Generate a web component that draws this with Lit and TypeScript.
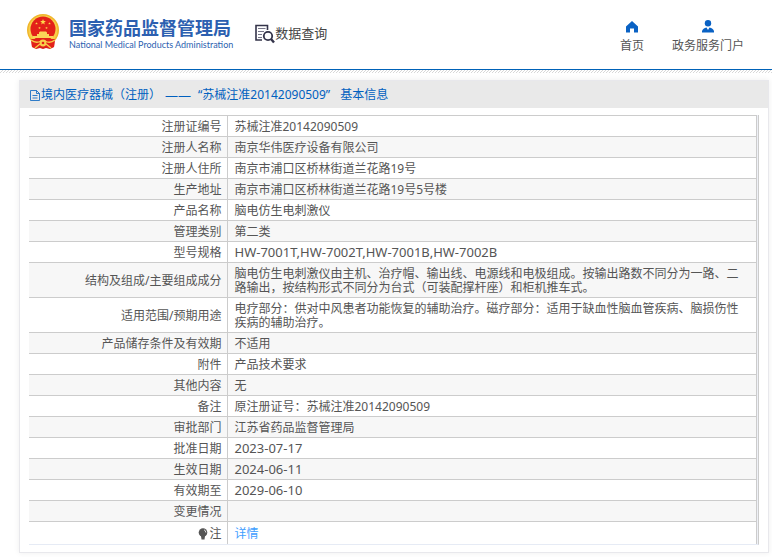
import { LitElement, html, css, svg } from "lit";
import { customElement, property } from "lit/decorators.js";
import { classMap } from "lit/directives/class-map.js";

interface Row {
  label: string;
  value: string;
  latin?: boolean;
}

const ROWS: Row[] = [
  { label: "注册证编号", value: "苏械注准20142090509" },
  { label: "注册人名称", value: "南京华伟医疗设备有限公司" },
  { label: "注册人住所", value: "南京市浦口区桥林街道兰花路19号" },
  { label: "生产地址", value: "南京市浦口区桥林街道兰花路19号5号楼" },
  { label: "产品名称", value: "脑电仿生电刺激仪" },
  { label: "管理类别", value: "第二类" },
  { label: "型号规格", value: "HW-7001T,HW-7002T,HW-7001B,HW-7002B", latin: true },
  {
    label: "结构及组成/主要组成成分",
    value:
      "脑电仿生电刺激仪由主机、治疗帽、输出线、电源线和电极组成。按输出路数不同分为一路、二路输出，按结构形式不同分为台式（可装配撑杆座）和柜机推车式。",
  },
  {
    label: "适用范围/预期用途",
    value:
      "电疗部分：供对中风患者功能恢复的辅助治疗。磁疗部分：适用于缺血性脑血管疾病、脑损伤性疾病的辅助治疗。",
  },
  { label: "产品储存条件及有效期", value: "不适用" },
  { label: "附件", value: "产品技术要求" },
  { label: "其他内容", value: "无" },
  { label: "备注", value: "原注册证号：苏械注准20142090509" },
  { label: "审批部门", value: "江苏省药品监督管理局" },
  { label: "批准日期", value: "2023-07-17", latin: true },
  { label: "生效日期", value: "2024-06-11", latin: true },
  { label: "有效期至", value: "2029-06-10", latin: true },
  { label: "变更情况", value: "" },
];

const STAR = "M0 -3 L0.8 -1 L2.9 -0.9 L1.2 0.4 L1.8 2.4 L0 1.2 L-1.8 2.4 L-1.2 0.4 L-2.9 -0.9 L-0.8 -1 Z";

const emblem = html`<svg class="emblem" viewBox="0 0 32 36" aria-hidden="true">
  <path d="M4 23 L5 33 L9 35 L13 34 L16 35 L19 34 L23 35 L27 33 L28 23 Z" fill="#d9201a" />
  <circle cx="16" cy="16" r="16" fill="#f0b62c" />
  <circle cx="16" cy="16" r="14.5" fill="#f8cf4a" />
  <circle cx="16" cy="15" r="12.5" fill="#e32119" />
  <path d=${STAR} transform="translate(16 8)" fill="#ffd84a" />
  ${[[9.5, 9.5], [12.5, 14], [19.5, 14], [22.5, 9.5]].map(
    ([x, y]) => svg`<path d=${STAR} transform="translate(${x} ${y}) scale(.45)" fill="#ffd84a" />`
  )}
  <path d="M12 18.5 L13 17.5 H19 L20 18.5 V20 H22 V22 H26 V24 H6 V22 H10 V20 H12 Z" fill="#fbd558" />
  <path d="M4 25 H28 L27 33 L22 34 L16 32 L10 34 L5 33 Z" fill="#e32119" />
  <path d="M4 26 Q9 30 14 27 M28 26 Q23 30 18 27 M8 34 L13 30 M24 34 L19 30" stroke="#f8cf4a" stroke-width="1.4" fill="none" />
  <circle cx="16" cy="29" r="3.4" fill="#f8cf4a" />
  <circle cx="16" cy="29" r="1.3" fill="#e32119" />
</svg>`;

const searchIcon = html`<svg class="search-icon" viewBox="0 0 20 20" aria-hidden="true" fill="none" stroke="#34344a">
  <path d="M12.5 6 V1.5 H1 V16 H7" stroke-width="1.6" />
  <path d="M3 4.5 H10.5 M3 7.5 H9 M3 10.5 H7 M3 13.5 H7" stroke-width="1.2" stroke="#77778a" />
  <circle cx="13" cy="12" r="4.2" stroke-width="1.8" />
  <path d="M16 15 L19 18.5" stroke-width="2.4" />
</svg>`;

@customElement("app-root")
export class AppRoot extends LitElement {
  @property({ attribute: false }) rows: Row[] = ROWS;

  static styles = css`
    :host {
      display: block;
      min-height: 100vh;
      background: #fff;
      color: #555;
      font: 12px/14px "Noto Sans", "Noto Sans CJK SC", sans-serif;
    }
    * { box-sizing: border-box; }
    svg { display: block; flex: none; }
    a { text-decoration: none; }
    .top {
      display: flex;
      align-items: flex-start;
      height: 70px;
      padding: 0 28px 0 27px;
      border-bottom: 1px solid #0062b8;
    }
    .brand { display: flex; gap: 10px; padding-top: 14px; color: #2c5fb0; }
    .emblem { width: 32px; height: 36px; }
    .names { display: flex; flex-direction: column; padding-top: 3px; white-space: nowrap; }
    .cn { font: 700 18px/20px "Noto Sans CJK SC", sans-serif; }
    .en { font: 400 9px/16px Lato, sans-serif; }
    .query { display: flex; margin: 24px 0 0 22px; align-items: flex-start; }
    .query h1 { margin: 0; font: 400 13px/18px "Noto Sans CJK SC", sans-serif; color: #444; white-space: nowrap; }
    .search-icon { width: 20px; height: 20px; }
    .nav { display: flex; gap: 28px; margin-left: auto; padding-top: 20px; }
    .nav a { display: flex; flex-direction: column; align-items: center; gap: 4px; color: #555; line-height: 16px; white-space: nowrap; }
    .nav svg { width: 14px; height: 14px; }
    .hatch {
      height: 3px;
      background: linear-gradient(135deg, #fff 40%, #d8d8d8 40% 60%, #fff 60%) 0 0 / 3px 3px;
    }
    .panel {
      margin: 7px 3px 4px 19px;
      border: 1px solid #e8e8ec;
      box-shadow: 0 0 6px #eee;
    }
    .panel h2 {
      display: flex;
      align-items: center;
      height: 27px;
      margin: 0;
      padding-left: 9px;
      background: #e9e9e9;
      color: #0060bf;
      font-size: 12px;
      font-weight: 400;
      white-space: nowrap;
    }
    .dash { margin: 0 7px 0 4px; font-size: 13px; }
    .topic { margin-left: 10px; }
    .doc { width: 12px; height: 12px; }
    .frame {
      margin: 7px 9px 7px;
      padding-right: 1px;
      border-right: 1px solid #ccc;
      border-bottom: 1px solid #e6ebf5;
      background: #eef0f6;
    }
    table { width: 100%; border-collapse: collapse; background: #fff; table-layout: fixed; }
    .label-col { width: 198px; }
    tr { border-top: 1px solid #ccc; }
    tr:nth-child(even) { background: #f7f7f7; }
    tr:last-child { background: #fff; }
    th, td { padding: 4px 5px 2px 7px; font-weight: 400; vertical-align: middle; border-right: 1px solid #ccc; height: 21px; }
    th { text-align: right; }
    td { text-align: left; padding-right: 14px; }
    td.latin { padding-top: 3px; padding-bottom: 3px; font-size: 13px; }
    .note { display: flex; justify-content: flex-end; align-items: center; line-height: 16px; }
    .note svg { width: 12px; height: 12px; }
    .detail { color: #409eff; }
  `;

  render() {
    return html`
      <header class="top">
        <div class="brand">
          ${emblem}
          <div class="names">
            <span class="cn">国家药品监督管理局</span>
            <span class="en">National Medical Products Administration</span>
          </div>
        </div>
        <div class="query">${searchIcon}<h1>数据查询</h1></div>
        <nav class="nav">
          <a href="#home">
            <svg viewBox="0 0 14 14" aria-hidden="true"><path d="M7 1 L13 6.5 V12.5 H9 V8.5 H5 V12.5 H1 V6.5 Z" fill="#0a62c4" /></svg>
            首页
          </a>
          <a href="#portal">
            <svg viewBox="0 0 14 14" aria-hidden="true"><circle cx="7" cy="3.3" r="3.2" fill="#0a62c4" /><path d="M1 12.5 V11 Q2 8 5.5 7.5 L7 10 L8.5 7.5 Q12 8 13 11 V12.5 Z" fill="#0a62c4" /></svg>
            政务服务门户
          </a>
        </nav>
      </header>
      <div class="hatch"></div>
      <main class="panel">
        <h2>
          <svg class="doc" viewBox="0 0 12 12" fill="none" stroke="#0060bf" aria-hidden="true"><path d="M1.5 1.5 H7.5 L10.5 4.5 V11.5 H1.5 Z M7.5 1.5 V4.5 H10.5 M3.5 6.5 H8.5 M3.5 9 H8.5" stroke-width=".8" /></svg>
          <span>境内医疗器械（注册）</span><span class="dash">——</span><span>“苏械注准20142090509”</span><span class="topic">基本信息</span>
        </h2>
        <div class="frame">
          <table>
            <colgroup><col class="label-col" /><col /></colgroup>
            <tbody>
              ${this.rows.map(
                (r) => html`<tr>
                  <th scope="row">${r.label}</th>
                  <td class=${classMap({ latin: !!r.latin })}>${r.value}</td>
                </tr>`
              )}
              <tr>
                <th scope="row">
                  <span class="note"><svg viewBox="0 0 12 12" aria-hidden="true"><circle cx="6" cy="4.5" r="4.3" fill="#555" /><path d="M4 8 H8 L7.5 11.5 H4.5 Z" fill="#555" /><path d="M7 1.8 Q8.8 2.5 8.8 4.5" stroke="#fff" stroke-width=".8" fill="none" /></svg>注</span>
                </th>
                <td><a class="detail" href="#detail">详情</a></td>
              </tr>
            </tbody>
          </table>
        </div>
      </main>
    `;
  }
}
